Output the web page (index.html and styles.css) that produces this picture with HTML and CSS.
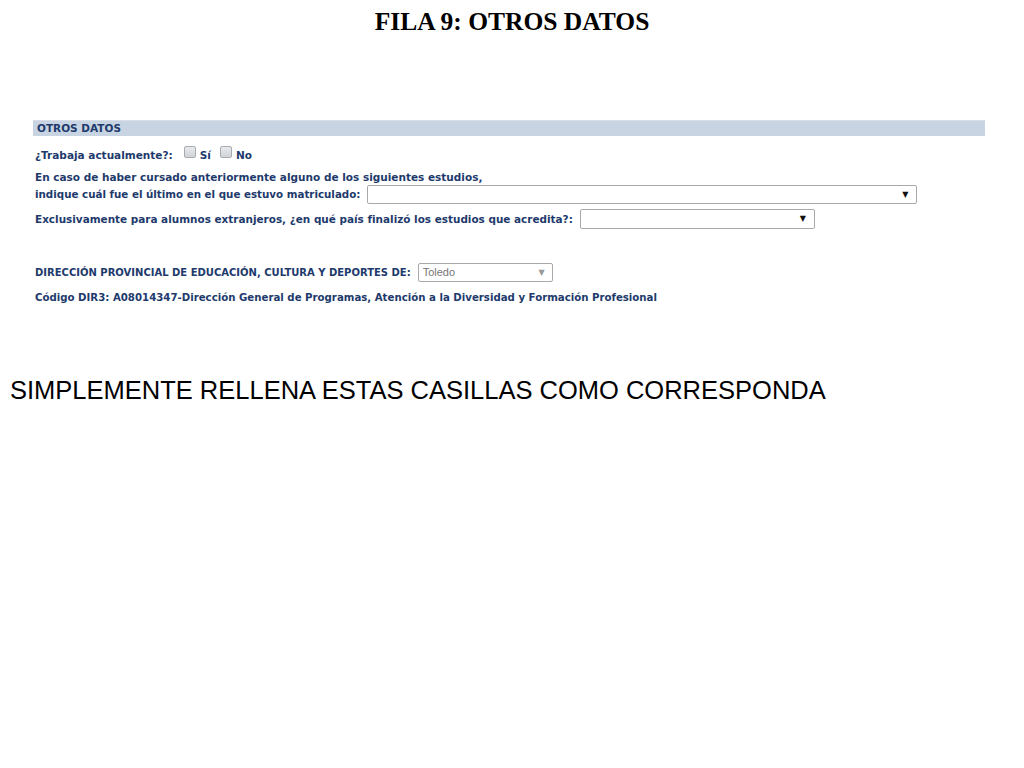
FILE: index.html
```html
<!DOCTYPE html>
<html lang="es">
<head>
<meta charset="utf-8">
<title>Fila 9: Otros datos</title>
<link rel="stylesheet" href="styles.css">
</head>
<body>
<h1 class="title">FILA 9: OTROS DATOS</h1>
<section class="form">
  <div class="form-head">OTROS DATOS</div>
  <div class="row row-work">
    <span class="label">¿Trabaja actualmente?:</span>
    <span class="check"></span><span class="opt">Sí</span>
    <span class="check"></span><span class="opt">No</span>
  </div>
  <div class="row row-line1"><span class="label">En caso de haber cursado anteriormente alguno de los siguientes estudios,</span></div>
  <div class="row row-line2">
    <span class="label label-last">indique cuál fue el último en el que estuvo matriculado:</span>
    <span class="select select-wide"><span class="arrow">▼</span></span>
  </div>
  <div class="row row-foreign">
    <span class="label label-foreign">Exclusivamente para alumnos extranjeros, ¿en qué país finalizó los estudios que acredita?:</span>
    <span class="select select-mid"><span class="arrow">▼</span></span>
  </div>
  <div class="row row-dir">
    <span class="label label-caps">DIRECCIÓN PROVINCIAL DE EDUCACIÓN, CULTURA Y DEPORTES DE:</span>
    <span class="select select-small disabled"><span class="value">Toledo</span><span class="arrow">▼</span></span>
  </div>
  <div class="row row-code"><span class="label label-code">Código DIR3: A08014347-Dirección General de Programas, Atención a la Diversidad y Formación Profesional</span></div>
</section>
<p class="note">SIMPLEMENTE RELLENA ESTAS CASILLAS COMO CORRESPONDA</p>
</body>
</html>
```

FILE: styles.css
```css
html, body {
  margin: 0;
  padding: 0;
  background: #ffffff;
}
body {
  width: 1024px;
  height: 768px;
  overflow: hidden;
}
.title {
  margin: 0;
  padding-top: 7px;
  text-align: center;
  font-family: "Liberation Serif", "Times New Roman", serif;
  font-weight: bold;
  font-size: 25.5px;
  line-height: 29px;
  color: #000;
}
.form {
  margin: 84px 0 0 33px;
  width: 952px;
  font-family: "DejaVu Sans", Verdana, sans-serif;
  font-weight: bold;
  font-size: 10.5px;
  color: #1e3a6c;
}
.form-head {
  background: #c8d4e2;
  height: 15px;
  line-height: 15px;
  padding-left: 4px;
  font-size: 10.5px;
  border-top: 1px solid #d8dee8;
}
.row {
  display: flex;
  align-items: center;
  padding-left: 2px;
  white-space: nowrap;
}
.row-work { margin-top: 12px; height: 14px; }
.row-line1 { margin-top: 8px; height: 14px; }
.row-line2 { margin-top: 0; height: 20px; }
.row-foreign { margin-top: 5px; height: 20px; }
.row-dir { margin-top: 34px; height: 19px; }
.row-code { margin-top: 8px; height: 14px; }
.label-last { font-size: 10.3px; }
.label-foreign { font-size: 10.44px; }
.label-caps { font-size: 10px; }
.label-code { font-size: 10.2px; }
.check {
  box-sizing: border-box;
  width: 12px;
  height: 12px;
  border: 1px solid #a8acb2;
  border-radius: 2px;
  background: linear-gradient(#e8eaec, #d0d3d6);
  margin-left: 11px;
  margin-right: 4px;
  margin-top: -6px;
}
.check + .opt + .check { margin-left: 9px; }
.select {
  position: relative;
  box-sizing: border-box;
  height: 19px;
  border: 1px solid #a9a9a9;
  border-radius: 2px;
  background: #fff;
  margin-left: 7px;
}
.select-wide { width: 550px; }
.select-mid { width: 235px; height: 20px; }
.select-small { width: 135px; height: 19px; }
.arrow {
  position: absolute;
  right: 8px;
  top: 4px;
  font-size: 8px;
  line-height: 9px;
  color: #111;
  font-weight: normal;
}
.disabled .arrow { color: #999; right: 7px; }
.value {
  position: absolute;
  left: 4px;
  top: 2px;
  font-family: "Liberation Sans", Arial, sans-serif;
  font-weight: normal;
  font-size: 11px;
  color: #777;
}
.note {
  margin: 72px 0 0 10px;
  font-family: "Liberation Sans", Arial, sans-serif;
  font-size: 25.5px;
  line-height: 28px;
  color: #000;
}
```
